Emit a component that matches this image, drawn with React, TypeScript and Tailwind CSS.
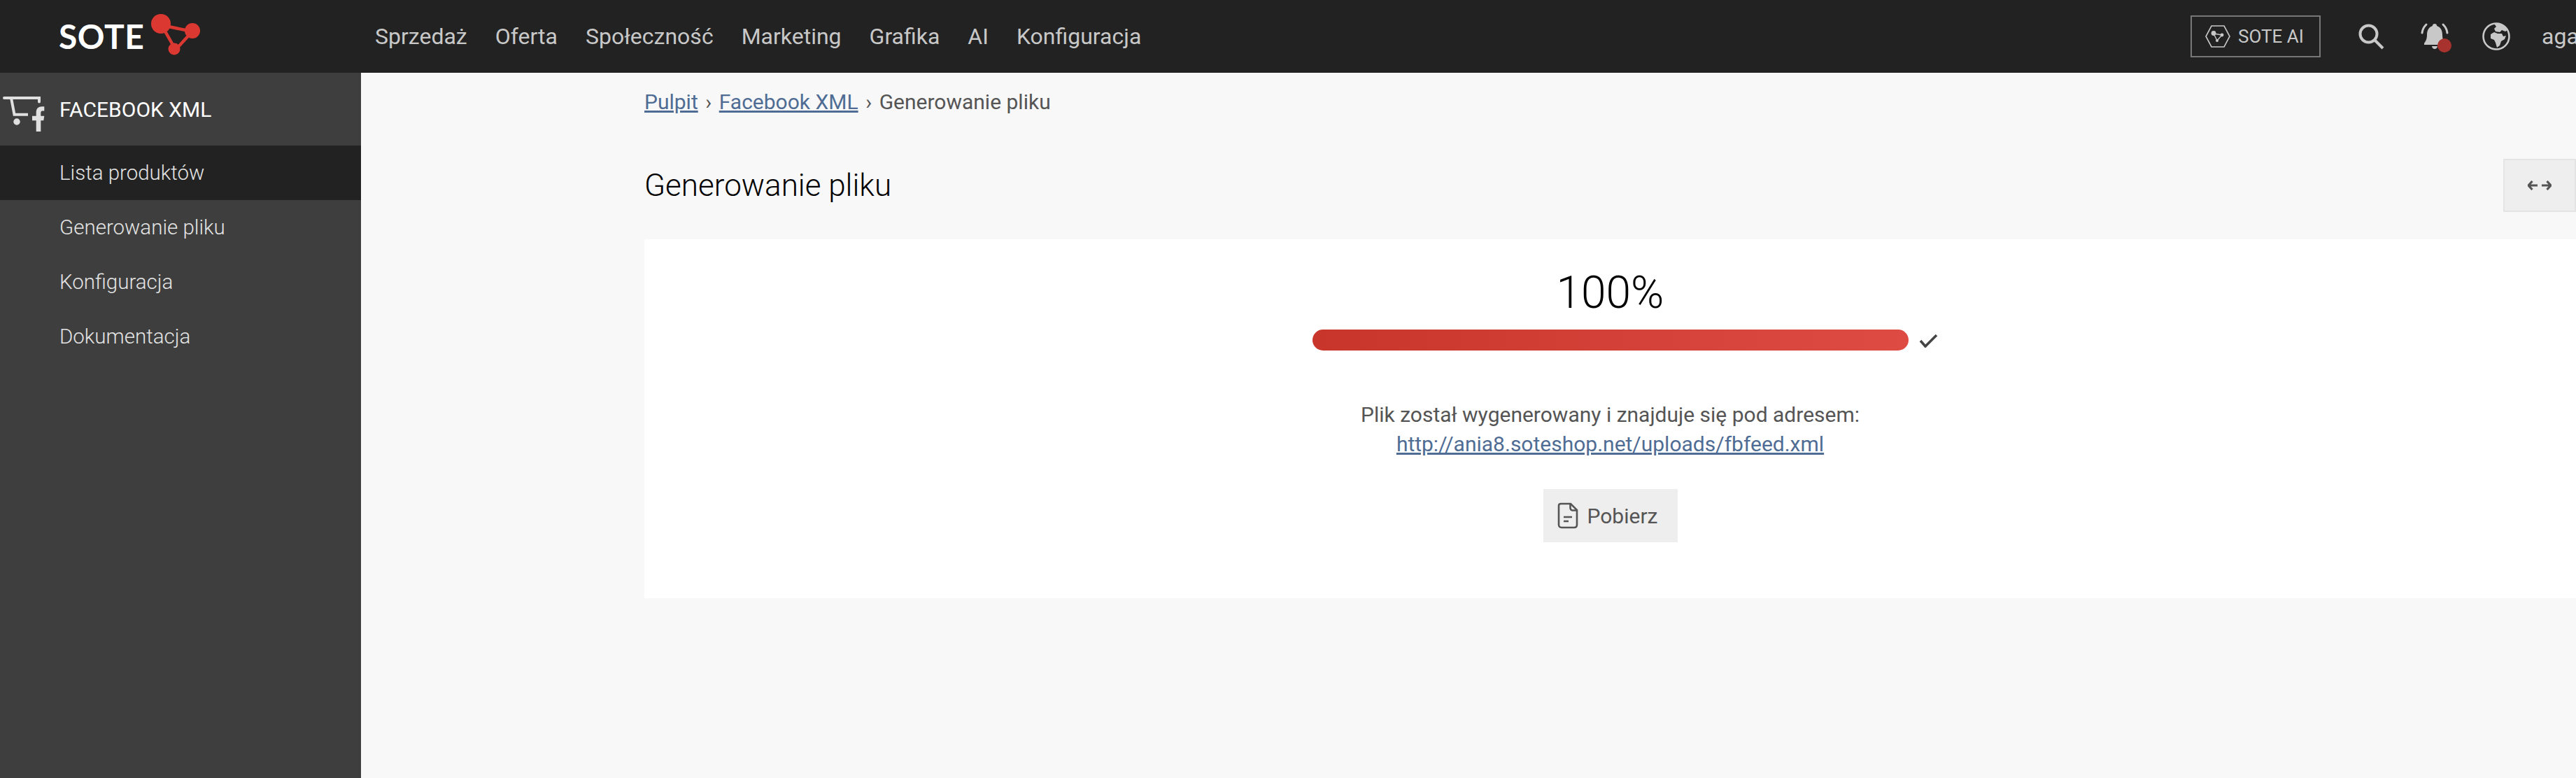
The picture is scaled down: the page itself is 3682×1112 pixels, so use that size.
import React from "react";

const navItems = ["Sprzedaż", "Oferta", "Społeczność", "Marketing", "Grafika", "AI", "Konfiguracja"];
const sideItems = ["Generowanie pliku", "Konfiguracja", "Dokumentacja"];

function Logo() {
  return (
    <svg width="100" height="70" viewBox="0 0 100 70" className="ml-[3px] mt-[-6px] shrink-0">
      <g fill="#dc3832" stroke="#dc3832">
        <path d="M22 22 L66 31 L42 57 Z" fill="none" strokeWidth="4.5" />
        <circle cx="21" cy="20" r="14" stroke="none" />
        <circle cx="66" cy="30" r="11" stroke="none" />
        <circle cx="40" cy="56" r="8.5" stroke="none" />
      </g>
    </svg>
  );
}

function CartF() {
  return (
    <svg width="70" height="104" viewBox="0 0 70 104" className="shrink-0">
      <g fill="none" stroke="#e0e0e0" strokeWidth="4">
        <path d="M6 36 H56 V41.5" strokeLinecap="round" />
        <path d="M16 36 L20.5 59.7 H40" />
      </g>
      <circle cx="24" cy="70" r="3.5" fill="#e0e0e0" stroke="#e0e0e0" strokeWidth="2.5" />
      <path d="M51.7 84 V68.3 H46 V61.7 H51.7 V57 C51.7 51 55 48.3 60 48.3 H63.3 V54.5 H60.5 C59 54.5 58.3 55.5 58.3 57.5 V61.7 H63.3 L62.3 68.3 H58.3 V84 Z" fill="#e0e0e0" />
    </svg>
  );
}

function HexIcon() {
  return (
    <svg width="36" height="32" viewBox="0 0 36 32" className="shrink-0">
      <path d="M9 1 H27 L35 16 L27 31 H9 L1 16 Z" fill="none" stroke="#c8c8c8" strokeWidth="1.6" />
      <path d="M12 12 L24 14 L17 22 Z" fill="none" stroke="#c8c8c8" strokeWidth="1.4" />
      <circle cx="12" cy="11.5" r="3.4" fill="#c8c8c8" />
      <circle cx="24" cy="14" r="2.4" fill="#c8c8c8" />
      <circle cx="17" cy="22" r="2" fill="#c8c8c8" />
    </svg>
  );
}

function SearchIcon() {
  return (
    <svg width="37" height="37" viewBox="0 0 37 37" className="shrink-0">
      <circle cx="14.5" cy="14.5" r="12" fill="none" stroke="#c8c8c8" strokeWidth="4" />
      <path d="M23.5 23.5 L35 35" stroke="#c8c8c8" strokeWidth="4" />
    </svg>
  );
}

function BellIcon() {
  return (
    <div className="relative w-[40px] h-[40px] shrink-0">
      <svg width="40" height="40" viewBox="0 0 40 40">
        <path d="M20 2 C22 2 23 3 23.2 5 C29 7 31 12 31 18 C31 24 33 27 35 30 V32 H5 V30 C7 27 9 24 9 18 C9 12 11 7 16.8 5 C17 3 18 2 20 2 Z" fill="#c8c8c8" />
        <path d="M16 34 H24 C23.5 37 21.5 38 20 38 C18.5 38 16.5 37 16 34 Z" fill="#c8c8c8" />
        <path d="M8 3 C4.5 6.5 2.5 10 2 15 M32 3 C35.5 6.5 37.5 10 38 15" fill="none" stroke="#c8c8c8" strokeWidth="3" strokeLinecap="round" />
      </svg>
      <span className="absolute left-[24px] top-[23px] w-[20px] h-[20px] rounded-full bg-[#a8322d]" />
    </div>
  );
}

function GlobeIcon() {
  return (
    <svg width="40" height="40" viewBox="0 0 40 40" className="shrink-0">
      <circle cx="20" cy="20" r="18.5" fill="none" stroke="#c8c8c8" strokeWidth="2.6" />
      <path d="M17 2 C24 1 32 4 36 11 L33 13 L28 11 L25 14 L19 13 L17 9 L20 6 Z" fill="#c8c8c8" />
      <path d="M12 17 L17 14 L22 16 L28 16 L30 20 L34 19 L32 24 L27 27 L25 33 L21 36 L19 29 L17 25 L12 23 Z" fill="#c8c8c8" />
    </svg>
  );
}

function ArrowsIcon() {
  return (
    <svg width="34" height="14" viewBox="0 0 34 14">
      <path d="M6.5 1 L1 7 L6.5 13 M1.5 7 H14 M27.5 1 L33 7 L27.5 13 M32.5 7 H20" fill="none" stroke="#555555" strokeWidth="3.2" />
    </svg>
  );
}

function FileIcon() {
  return (
    <svg width="30" height="38" viewBox="0 0 30 38" className="shrink-0">
      <path d="M5 2 H19 L28 11 V32 C28 34.5 26.5 36 24 36 H6 C3.5 36 2 34.5 2 32 V5 C2 3 3 2 5 2 Z" fill="none" stroke="#555555" strokeWidth="2.6" />
      <path d="M18.5 2 V8 C18.5 10 20 11.5 22 11.5 H28" fill="none" stroke="#555555" strokeWidth="2.6" />
      <path d="M9 21 H21 M9 27 H16" stroke="#555555" strokeWidth="2.6" />
    </svg>
  );
}

export default function App() {
  return (
    <div className="flex flex-col w-full h-[1112px] overflow-hidden bg-[#f8f8f8] font-['Roboto',sans-serif]">
      <header className="flex items-center h-[104px] shrink-0 bg-[#222222] text-[#c8c8c8]">
        <div className="flex items-center w-[536px] pl-[84px] shrink-0">
          <span className="font-['Lato',sans-serif] font-bold text-[48px] leading-none text-white tracking-[0.5px]">SOTE</span>
          <Logo />
        </div>
        <nav className="flex items-center gap-[40px] text-[32px] leading-none">
          {navItems.map((n) => (
            <span key={n}>{n}</span>
          ))}
        </nav>
        <div className="ml-auto flex items-center shrink-0 w-[551px] overflow-hidden">
          <div className="flex items-center gap-[11px] shrink-0 w-[186px] h-[60px] pl-[19px] border-2 border-[#777777] text-[26px]">
            <HexIcon />
            <span>SOTE AI</span>
          </div>
          <div className="ml-[54px] shrink-0"><SearchIcon /></div>
          <div className="ml-[52px] shrink-0"><BellIcon /></div>
          <div className="ml-[48px] shrink-0"><GlobeIcon /></div>
          <span className="ml-[45px] shrink-0 text-[32px]">aga</span>
        </div>
      </header>
      <div className="flex flex-1 min-h-0">
        <aside className="w-[516px] shrink-0 bg-[#3e3e3e] text-[#e4e4e4] text-[29.5px] font-light">
          <div className="flex items-center h-[104px] font-normal text-[30px] text-white">
            <div className="w-[85px] h-[104px] shrink-0"><CartF /></div>
            <span>FACEBOOK XML</span>
          </div>
          <div className="flex items-center h-[78px] pl-[85px] bg-[#222222]">Lista produktów</div>
          {sideItems.map((s) => (
            <div key={s} className="flex items-center h-[78px] pl-[85px]">{s}</div>
          ))}
        </aside>
        <main className="flex-1 min-w-0 flex flex-col pl-[405px]">
          <div className="flex items-center gap-[10.5px] h-[82px] text-[30px] text-[#555555]">
            <a className="underline text-[#4f6d94]">Pulpit</a>
            <span>›</span>
            <a className="underline text-[#4f6d94]">Facebook XML</a>
            <span>›</span>
            <span>Generowanie pliku</span>
          </div>
          <div className="flex items-center justify-between mt-[41px] mb-[39px] h-[76px]">
            <h1 className="text-[44px] font-light text-black">Generowanie pliku</h1>
            <button className="flex items-center justify-center w-[104px] h-[76px] bg-[#eeeeee] border-2 border-[#e4e4e4]">
              <ArrowsIcon />
            </button>
          </div>
          <section className="flex flex-col items-center h-[513px] bg-white pt-[32px]">
            <div className="h-[90px] flex items-center text-[64px] font-light text-black">100%</div>
            <div className="relative mt-[7px] w-[852px] h-[30px] rounded-full bg-gradient-to-r from-[#c8352a] to-[#de4b43]">
              <svg width="28" height="20" viewBox="0 0 28 20" className="absolute left-[867px] top-[6px]">
                <path d="M2 10 L9 18 L25 2" fill="none" stroke="#444444" strokeWidth="3.6" />
              </svg>
            </div>
            <p className="mt-[71px] text-[30px] leading-[42px] text-[#555555] text-center">
              Plik został wygenerowany i znajduje się pod adresem:
              <br />
              <a className="underline text-[#4f6d94]">http://ania8.soteshop.net/uploads/fbfeed.xml</a>
            </p>
            <button className="flex items-center justify-start gap-[13px] mt-[43px] w-[192px] h-[76px] pl-[20px] bg-[#eeeeee] text-[30px] text-[#555555]">
              <FileIcon />
              <span>Pobierz</span>
            </button>
          </section>
        </main>
      </div>
    </div>
  );
}
